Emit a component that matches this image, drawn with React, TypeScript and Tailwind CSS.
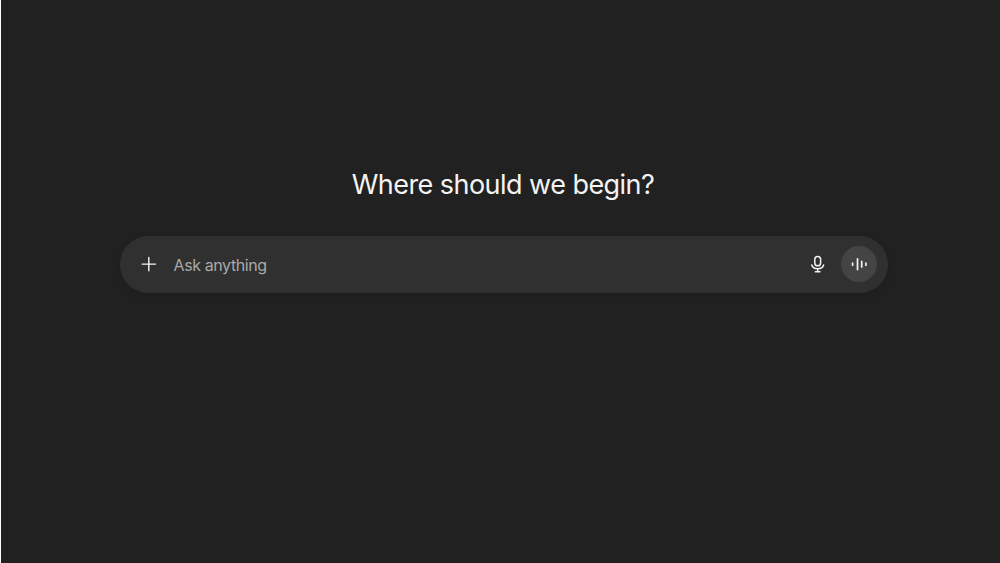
import React from 'react'

const PlusIcon: React.FC = () => (
  <svg width="16" height="16" viewBox="0 0 16 16" fill="none" stroke="#f3f3f3" strokeWidth="1.4" strokeLinecap="round">
    <path d="M7.8 1.4v13.4M1.1 8.1h13.4" />
  </svg>
)

const MicIcon: React.FC = () => (
  <svg width="16" height="20" viewBox="0 0 16 20" fill="none" stroke="#f3f3f3" strokeWidth="1.5" strokeLinecap="round">
    <rect x="4.8" y="2.4" width="5.8" height="9.4" rx="2.9" />
    <path d="M1.8 11a6.1 5.1 0 0 0 11.8 0M7.7 14.8v2.8M5.4 17.7h4.6" />
  </svg>
)

const VoiceIcon: React.FC = () => (
  <svg width="18" height="18" viewBox="0 0 18 18" fill="none" stroke="#f3f3f3" strokeWidth="1.7" strokeLinecap="round">
    <path d="M2.6 8.2v2M7.5 3.8v10.8M11.7 6.4v5.6M15.9 8.2v2" />
  </svg>
)

const PromptBar: React.FC = () => (
  <form className="flex h-[57px] w-[768px] items-center rounded-full bg-[#303030] pr-[11px] pb-px pl-[21px] shadow-[0_3px_8px_rgba(0,0,0,0.12)]">
    <button type="button" aria-label="Add">
      <PlusIcon />
    </button>
    <span className="ml-[17px] flex-1 pt-px text-[16px] tracking-[-0.4px] text-[#a9a9a9]">Ask anything</span>
    <button type="button" aria-label="Dictate">
      <MicIcon />
    </button>
    <button
      type="button"
      aria-label="Voice mode"
      className="ml-[15px] flex size-9 items-center justify-center rounded-full bg-[#444444]"
    >
      <VoiceIcon />
    </button>
  </form>
)

const App: React.FC = () => (
  <main className="flex h-screen flex-col items-center overflow-hidden border-l border-white bg-[#212121] pt-[165px] pl-[6px] font-['Inter',sans-serif]">
    <h1 className="mb-[31px] pr-px text-[27px] leading-10 tracking-[-0.54px] whitespace-nowrap text-[#f3f3f3]">
      Where should we begin?
    </h1>
    <PromptBar />
  </main>
)

export default App
